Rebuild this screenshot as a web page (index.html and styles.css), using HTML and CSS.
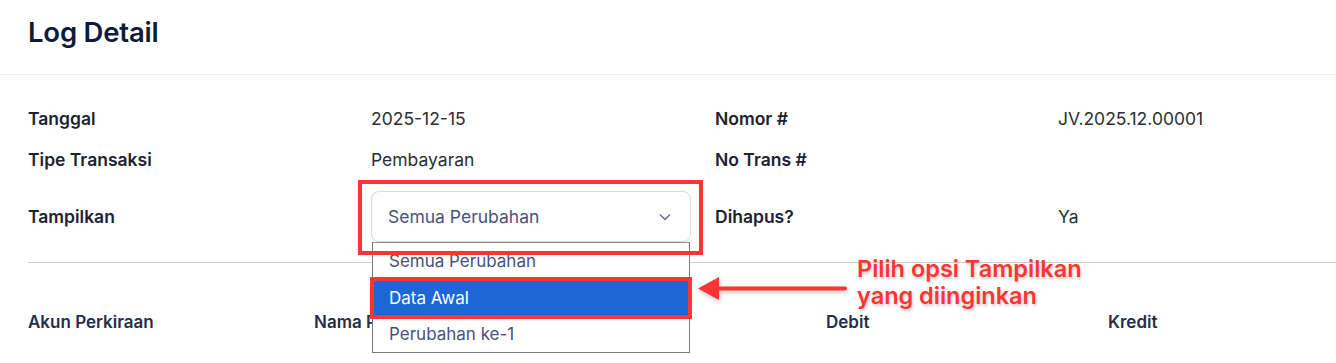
FILE: index.html
```html
<!DOCTYPE html>
<html lang="id">
<head>
<meta charset="utf-8">
<title>Log Detail</title>
<link rel="stylesheet" href="styles.css">
</head>
<body>
<div class="page">
  <header class="header">
    <h1 class="title">Log Detail</h1>
  </header>
  <section class="info">
    <div class="label">Tanggal</div>
    <div class="value">2025-12-15</div>
    <div class="label">Nomor #</div>
    <div class="value">JV.2025.12.00001</div>

    <div class="label">Tipe Transaksi</div>
    <div class="value">Pembayaran</div>
    <div class="label">No Trans #</div>
    <div class="value"></div>

    <div class="label row3">Tampilkan</div>
    <div class="value row3">
      <div class="select-wrap">
        <div class="select">
          <span>Semua Perubahan</span>
          <svg class="chev" width="14" height="14" viewBox="0 0 14 14"><path d="M2.5 5 L7 9.5 L11.5 5" fill="none" stroke="#6b7591" stroke-width="1.6" stroke-linecap="round" stroke-linejoin="round"/></svg>
        </div>
        <div class="hl-box"></div>
        <ul class="options">
          <li class="opt">Semua Perubahan</li>
          <li class="opt active">Data Awal</li>
          <li class="opt">Perubahan ke-1</li>
        </ul>
      </div>
    </div>
    <div class="label row3">Dihapus?</div>
    <div class="value row3">Ya</div>
  </section>
  <hr class="divider">
  <section class="table-head">
    <div class="th c1">Akun Perkiraan</div>
    <div class="th c2">Nama Perkiraan</div>
    <div class="th c3">Debit</div>
    <div class="th c4">Kredit</div>
  </section>

  <div class="annotation">
    <svg class="arrow" width="150" height="26" viewBox="0 0 150 26"><path d="M147 12.5 L20 12.5" stroke="#ff3434" stroke-width="4" stroke-linecap="round"/><path d="M0 12.5 L21 1 L21 24 Z" fill="#ff3434"/></svg>
    <div class="note">Pilih opsi Tampilkan<br>yang diinginkan</div>
  </div>
</div>
</body>
</html>
```

FILE: styles.css
```css
* { box-sizing: border-box; }
html, body { margin: 0; padding: 0; background: #fff; }
body {
  font-family: Inter, "Noto Sans", "Liberation Sans", sans-serif;
  width: 1336px;
  height: 363px;
  overflow: hidden;
}
.page { position: relative; height: 363px; }

.header {
  height: 75px;
  padding: 0 28px;
  display: flex;
  align-items: center;
  border-bottom: 1px solid #ececee;
}
.title {
  margin: 0;
  margin-top: -10px;
  font-size: 27.5px;
  font-weight: 600;
  color: #111a3b;
  letter-spacing: -0.2px;
}

.info {
  display: grid;
  grid-template-columns: 343px 344px 343px 343px;
  grid-auto-rows: auto;
  row-gap: 17px;
  padding: 32px 0 0 28px;
  align-items: center;
}
.label {
  font-size: 17.5px;
  font-weight: 600;
  color: #1d2230;
  line-height: 24px;
}
.value {
  font-size: 17.5px;
  color: #2c2e33;
  line-height: 24px;
  min-height: 24px;
}
.row3 { margin-top: 2px; }

.select-wrap {
  position: relative;
  width: 320px;
}
.select {
  height: 51px;
  border: 1px solid #d6dae3;
  border-radius: 8px;
  display: flex;
  align-items: center;
  justify-content: space-between;
  padding: 0 18px 0 16px;
  color: #48537a;
  font-size: 17.5px;
  background: #fff;
}
.chev { display: block; }
.hl-box {
  position: absolute;
  left: -13px;
  top: -11px;
  width: 345px;
  height: 75px;
  border: 4px solid #ff3434;
  pointer-events: none;
  z-index: 4;
}
.options {
  position: absolute;
  left: 1px;
  top: 51px;
  width: 318px;
  margin: 0;
  padding: 0;
  list-style: none;
  border: 1px solid #7b7b7b;
  border-top-color: #8a8a8a;
  background: #fff;
  z-index: 2;
}
.opt {
  height: 36px;
  line-height: 36px;
  padding-left: 16px;
  font-size: 17px;
  color: #48537a;
}
.opt:first-child { line-height: 36px; height: 37px; }
.opt.active {
  background: #1b67d6;
  color: #fff;
  outline: 4px solid #ff3434;
  outline-offset: -1px;
  position: relative;
  z-index: 1;
}

.divider {
  margin: 20px 0 0 28px;
  border: 0;
  border-top: 1px solid #cfcfd2;
  height: 0;
}

.table-head {
  display: grid;
  grid-template-columns: 286px 512px 282px 200px;
  padding: 47px 0 0 28px;
}
.th {
  font-size: 17px;
  font-weight: 600;
  color: #262e47;
  line-height: 24px;
}

.annotation {
  position: absolute;
  left: 698px;
  top: 255px;
  display: flex;
  align-items: flex-start;
  z-index: 5;
}
.arrow {
  display: block;
  margin-top: 21px;
  filter: drop-shadow(1px 2px 2px rgba(0,0,0,0.25));
}
.note {
  margin-left: 9px;
  font-size: 23.5px;
  font-weight: 600;
  line-height: 27px;
  color: #ff3434;
  text-shadow: 1px 2px 3px rgba(0,0,0,0.22);
  white-space: nowrap;
}
```
